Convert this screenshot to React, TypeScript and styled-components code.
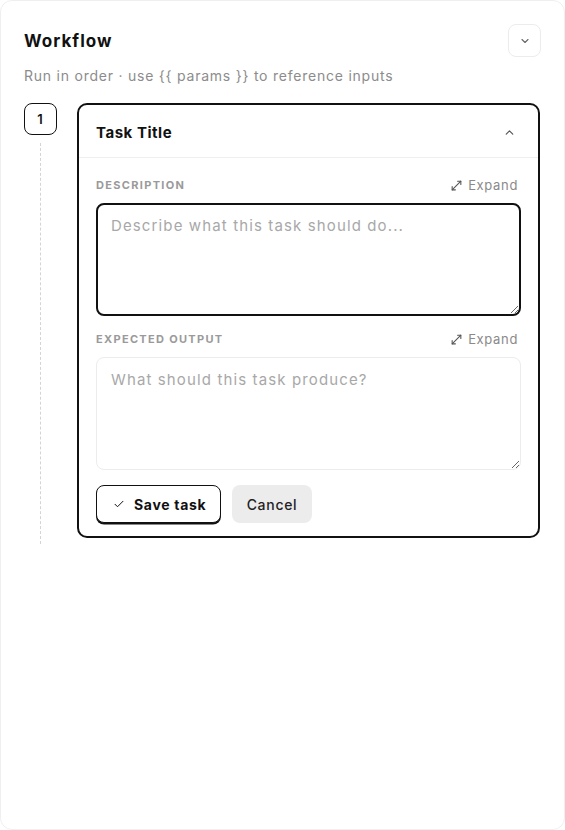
import styled, { createGlobalStyle } from 'styled-components';

const GlobalStyle = createGlobalStyle`
  html, body {
    margin: 0;
    padding: 0;
    background: #ffffff;
  }
  body {
    font-family: 'Inter', 'Liberation Sans', sans-serif;
    color: #111;
    letter-spacing: 0.05em;
  }
  * { box-sizing: border-box; }
`;

const Panel = styled.div`
  width: 565px;
  height: 830px;
  border: 1px solid #efefef;
  border-radius: 12px;
  background: #fff;
  padding: 23px 24px 24px 23px;
  display: flex;
  flex-direction: column;
`;

const Header = styled.div`
  display: flex;
  align-items: center;
  justify-content: space-between;
`;

const Title = styled.h1`
  margin: 0;
  font-size: 17px;
  font-weight: 700;
  letter-spacing: 0.06em;
`;

const IconButton = styled.button`
  width: 33px;
  height: 33px;
  border: 1px solid #ececec;
  border-radius: 8px;
  background: #fff;
  display: flex;
  align-items: center;
  justify-content: center;
  color: #666;
  padding: 0;
  margin-right: -1px;
`;

const Subtitle = styled.p`
  margin: 10px 0 0 0;
  font-size: 14px;
  letter-spacing: 0.055em;
  color: #8c8c8c;
`;

const StepRow = styled.div`
  display: flex;
  gap: 20px;
  margin-top: 19px;
`;

const Rail = styled.div`
  width: 33px;
  display: flex;
  flex-direction: column;
  align-items: center;
`;

const StepBadge = styled.div`
  width: 33px;
  height: 32px;
  border: 1.5px solid #111;
  border-radius: 8px;
  display: flex;
  align-items: center;
  justify-content: center;
  font-size: 13px;
  font-weight: 600;
`;

const DashedLine = styled.div`
  flex: 1;
  margin-top: 8px;
  border-left: 1.5px dashed #d4d4d4;
  margin-bottom: -6px;
`;

const Card = styled.div`
  flex: 1;
  border: 2px solid #111;
  border-radius: 10px;
  overflow: hidden;
`;

const CardHeader = styled.div`
  height: 53px;
  display: flex;
  align-items: center;
  justify-content: space-between;
  padding: 3px 22px 0 17px;
  border-bottom: 1px solid #efefef;
  color: #555;
`;

const CardTitle = styled.span`
  font-size: 15px;
  font-weight: 700;
  letter-spacing: 0.035em;
  color: #111;
`;

const CardBody = styled.div`
  padding: 19px 17px 13px 17px;
  display: flex;
  flex-direction: column;
`;

const FieldHead = styled.div`
  display: flex;
  align-items: center;
  justify-content: space-between;
  padding-right: 3px;
  margin-bottom: 10px;
`;

const FieldLabel = styled.span`
  font-size: 11px;
  font-weight: 700;
  letter-spacing: 0.12em;
  color: #9a9a9a;
`;

const ExpandLink = styled.span`
  display: flex;
  align-items: center;
  gap: 5px;
  font-size: 13px;
  letter-spacing: 0.05em;
  color: #8a8a8a;
`;

const TextArea = styled.textarea<{ $focused?: boolean }>`
  width: 100%;
  height: 113px;
  resize: vertical;
  border: ${(p) => (p.$focused ? '2px solid #111' : '1px solid #ececec')};
  border-radius: 8px;
  padding: ${(p) => (p.$focused ? '11px 13px' : '12px 14px')};
  font-family: inherit;
  font-size: 15px;
  letter-spacing: 0.075em;
  color: #111;
  outline: none;
  margin-bottom: 15px;
  &::placeholder {
    color: #a8a8a8;
  }
`;

const Actions = styled.div`
  display: flex;
  gap: 11px;
`;

const SaveButton = styled.button`
  width: 125px;
  height: 38px;
  padding: 0 0 0 16px;
  border: 1.5px solid #111;
  border-radius: 8px;
  background: #fff;
  box-shadow: 0 1.5px 0 #111;
  display: flex;
  align-items: center;
  gap: 9px;
  font-family: inherit;
  font-size: 14px;
  font-weight: 700;
  letter-spacing: 0.05em;
  color: #111;
`;

const CancelButton = styled.button`
  width: 80px;
  height: 38px;
  padding: 0;
  border: none;
  border-radius: 8px;
  background: #ececec;
  font-family: inherit;
  font-size: 14px;
  font-weight: 500;
  letter-spacing: 0.05em;
  color: #222;
`;

const ChevronDown = () => (
  <svg width="12" height="12" viewBox="0 0 24 24" fill="none" stroke="currentColor" strokeWidth="2.2" strokeLinecap="round" strokeLinejoin="round">
    <path d="M6 9l6 6 6-6" />
  </svg>
);

const ChevronUp = () => (
  <svg width="13" height="13" viewBox="0 0 24 24" fill="none" stroke="currentColor" strokeWidth="2.2" strokeLinecap="round" strokeLinejoin="round">
    <path d="M6 15l6-6 6 6" />
  </svg>
);

const ExpandIcon = () => (
  <svg width="13" height="13" viewBox="0 0 24 24" fill="none" stroke="#555" strokeWidth="2" strokeLinecap="round" strokeLinejoin="round">
    <path d="M14 4h6v6" />
    <path d="M10 20H4v-6" />
    <path d="M20 4L4 20" />
  </svg>
);

const CheckIcon = () => (
  <svg width="12" height="12" viewBox="0 0 24 24" fill="none" stroke="#111" strokeWidth="2" strokeLinecap="round" strokeLinejoin="round">
    <path d="M4 12.5l5 5L20 6.5" />
  </svg>
);

type FieldProps = {
  label: string;
  placeholder: string;
  focused?: boolean;
};

function Field({ label, placeholder, focused }: FieldProps) {
  return (
    <>
      <FieldHead>
        <FieldLabel>{label}</FieldLabel>
        <ExpandLink>
          <ExpandIcon />
          Expand
        </ExpandLink>
      </FieldHead>
      <TextArea $focused={focused} placeholder={placeholder} />
    </>
  );
}

function App() {
  return (
    <>
      <GlobalStyle />
      <Panel>
        <Header>
          <Title>Workflow</Title>
          <IconButton>
            <ChevronDown />
          </IconButton>
        </Header>
        <Subtitle>Run in order · use {'{{ params }}'} to reference inputs</Subtitle>

        <StepRow>
          <Rail>
            <StepBadge>1</StepBadge>
            <DashedLine />
          </Rail>
          <Card>
            <CardHeader>
              <CardTitle>Task Title</CardTitle>
              <ChevronUp />
            </CardHeader>
            <CardBody>
              <Field label="DESCRIPTION" placeholder="Describe what this task should do..." focused />
              <Field label="EXPECTED OUTPUT" placeholder="What should this task produce?" />
              <Actions>
                <SaveButton>
                  <CheckIcon />
                  Save task
                </SaveButton>
                <CancelButton>Cancel</CancelButton>
              </Actions>
            </CardBody>
          </Card>
        </StepRow>
      </Panel>
    </>
  );
}

export default App;
